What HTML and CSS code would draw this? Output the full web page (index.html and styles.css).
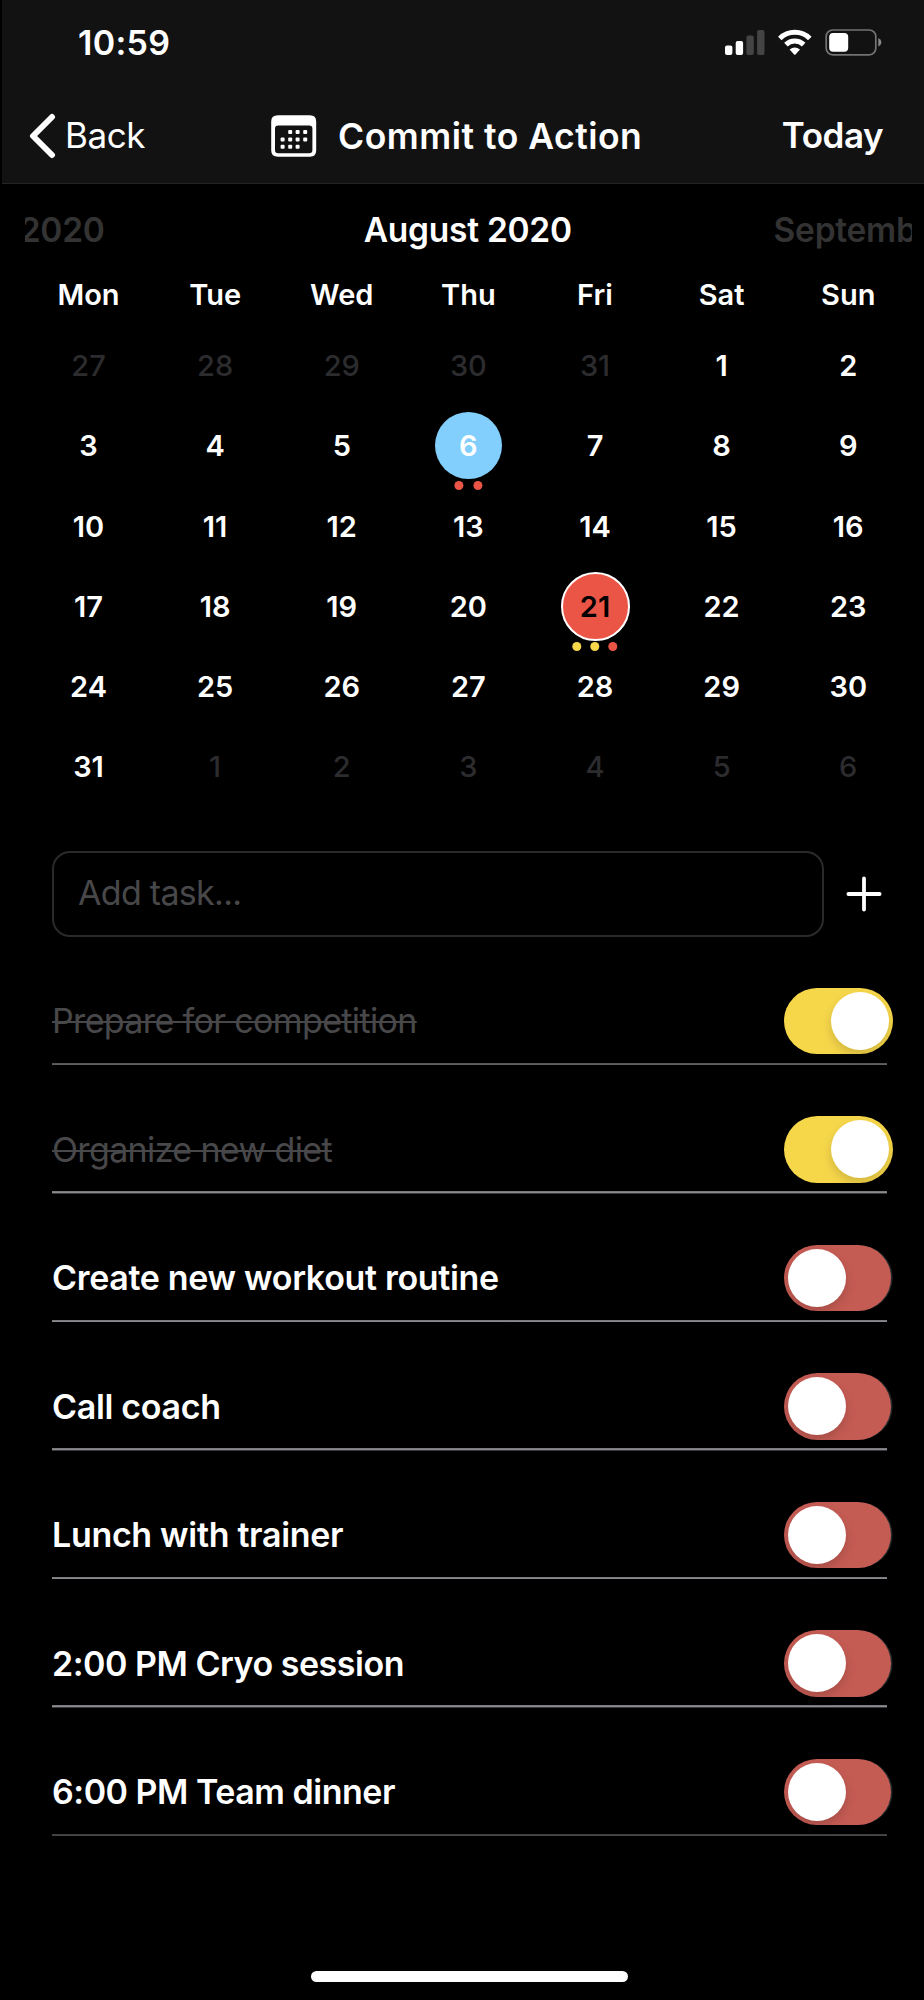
FILE: index.html
```
<!DOCTYPE html>
<html lang="en">
<head>
<meta charset="utf-8">
<title>Commit to Action</title>
<link rel="stylesheet" href="styles.css">
</head>
<body>
<div class="screen">
  <header class="header">
    <div class="status">
      <span class="clock">10:59</span>
      <svg class="status-icons" viewBox="0 0 158 28" width="158" height="28">
        <g fill="#fff">
          <rect x="0" y="16.5" width="7.4" height="9.5" rx="2"/>
          <rect x="10.7" y="12" width="7.4" height="14" rx="2"/>
          <g fill="#444"><rect x="21.4" y="6.5" width="7.4" height="19.5" rx="2"/>
          <rect x="32.1" y="1" width="7.4" height="25" rx="2"/></g>
        </g>
        <g fill="none" stroke="#fff" stroke-width="5">
          <path d="M54.8 9.4 A21.3 21.3 0 0 1 84.8 9.4"/>
          <path d="M60.9 15.6 A12.7 12.7 0 0 1 78.7 15.6"/>
        </g>
        <path d="M64.6 20.4 Q69.8 16.6 75 20.4 L70.5 25.5 Q69.8 26.1 69.1 25.5 Z" fill="#fff"/>
        <rect x="101.2" y="1" width="49.6" height="24.8" rx="6.5" fill="none" stroke="#737373" stroke-width="1.7"/>
        <rect x="104.2" y="4" width="19" height="18.8" rx="4" fill="#fff"/>
        <path d="M153.3 9 Q156.4 10.6 156.4 13.3 Q156.4 16 153.3 17.6 Z" fill="#8a8a8a"/>
      </svg>
    </div>
    <nav class="nav">
      <a class="back">
        <svg class="chevron" viewBox="0 0 27 46" width="27" height="46"><path d="M23 4 L4 23 L23 42" fill="none" stroke="#fff" stroke-width="6" stroke-linecap="round" stroke-linejoin="round"/></svg>
        <span>Back</span>
      </a>
      <div class="title">
        <svg viewBox="0 0 46 42" width="46" height="42">
          <path fill="#fff" fill-rule="evenodd" d="M7 .2 H39 Q45.2 .2 45.2 6.4 V35.6 Q45.2 41.8 39 41.8 H7 Q.2 41.8 .2 35.6 V6.4 Q.2 .2 7 .2 Z M7.2 10.5 Q4 10.5 4 13.7 V35 Q4 38.2 7.2 38.2 H38.2 Q41.4 38.2 41.4 35 V13.7 Q41.4 10.5 38.2 10.5 Z"/>
          <g fill="#fff">
            <rect x="17.2" y="15" width="4" height="4" rx="1"/><rect x="24.6" y="15" width="4" height="4" rx="1"/><rect x="32.2" y="15" width="4" height="4" rx="1"/>
            <rect x="9.6" y="22.4" width="4" height="4" rx="1"/><rect x="17.2" y="22.4" width="4" height="4" rx="1"/><rect x="24.6" y="22.4" width="4" height="4" rx="1"/><rect x="32.2" y="22.4" width="4" height="4" rx="1"/>
            <rect x="9.6" y="29.8" width="4" height="4" rx="1"/><rect x="17.2" y="29.8" width="4" height="4" rx="1"/><rect x="24.6" y="29.8" width="4" height="4" rx="1"/>
          </g>
        </svg>
        <h1>Commit to Action</h1>
      </div>
      <a class="today">Today</a>
    </nav>
  </header>

  <section class="calendar">
    <div class="months">
      <span class="month month-prev">2020</span>
      <span class="month month-current">August 2020</span>
      <span class="month month-next">Septemb</span>
    </div>
    <div class="week weekdays"><span>Mon</span><span>Tue</span><span>Wed</span><span>Thu</span><span>Fri</span><span>Sat</span><span>Sun</span></div>
    <div class="week"><span class="out">27</span><span class="out">28</span><span class="out">29</span><span class="out">30</span><span class="out">31</span><span>1</span><span>2</span></div>
    <div class="week"><span>3</span><span>4</span><span>5</span><span class="day-today">6<i class="dots"><i class="dot"></i><i class="dot"></i></i></span><span>7</span><span>8</span><span>9</span></div>
    <div class="week"><span>10</span><span>11</span><span>12</span><span>13</span><span>14</span><span>15</span><span>16</span></div>
    <div class="week"><span>17</span><span>18</span><span>19</span><span>20</span><span class="day-selected">21<i class="dots"><i class="dot dot-done"></i><i class="dot dot-done"></i><i class="dot"></i></i></span><span>22</span><span>23</span></div>
    <div class="week"><span>24</span><span>25</span><span>26</span><span>27</span><span>28</span><span>29</span><span>30</span></div>
    <div class="week"><span>31</span><span class="out">1</span><span class="out">2</span><span class="out">3</span><span class="out">4</span><span class="out">5</span><span class="out">6</span></div>
  </section>

  <div class="add">
    <div class="field">Add task...</div>
    <svg viewBox="0 0 36 36" width="36" height="36"><path d="M18 2.4 V33.6 M2.4 18 H33.6" stroke="#fff" stroke-width="3.8" stroke-linecap="round"/></svg>
  </div>

  <ul class="tasks">
    <li class="task done first"><span class="label">Prepare for competition</span><span class="toggle"></span></li>
    <li class="task done"><span class="label">Organize new diet</span><span class="toggle"></span></li>
    <li class="task"><span class="label">Create new workout routine</span><span class="toggle"></span></li>
    <li class="task"><span class="label">Call coach</span><span class="toggle"></span></li>
    <li class="task"><span class="label">Lunch with trainer</span><span class="toggle"></span></li>
    <li class="task timed"><span class="label">2:00 PM Cryo session</span><span class="toggle"></span></li>
    <li class="task timed last"><span class="label">6:00 PM Team dinner</span><span class="toggle"></span></li>
  </ul>
  <div class="home-indicator"></div>
</div>
</body>
</html>
```

FILE: styles.css
```
* { box-sizing: border-box; }

body {
  margin: 0;
  background: #000;
  color: #fff;
  font-family: Inter, "Liberation Sans", sans-serif;
}

.screen {
  display: flex;
  flex-direction: column;
  width: 924px;
  height: 2000px;
  overflow: hidden;
}

/* Header */
.header {
  height: 184px;
  margin-left: 2px;
  background: #121212;
  border-bottom: 1px solid #232323;
}

.status {
  display: flex;
  justify-content: space-between;
  align-items: center;
  height: 86px;
  padding: 0 41px 0 76px;
}

.clock {
  padding-bottom: 2px;
  font-size: 34px;
  font-weight: 600;
  letter-spacing: 0.3px;
}

.nav {
  display: flex;
  justify-content: space-between;
  align-items: center;
  height: 100px;
  padding: 0 41px 0 27px;
}

.back {
  display: flex;
  align-items: center;
  gap: 9px;
  width: 242px;
  font-size: 35px;
  letter-spacing: -0.4px;
}

.title {
  display: flex;
  align-items: center;
  gap: 21px;
  margin-right: auto;
}

h1 {
  margin: 0;
  font-size: 35.5px;
  font-weight: 600;
  letter-spacing: 0.5px;
}

.today {
  padding-bottom: 2px;
  font-size: 35px;
  font-weight: 600;
  letter-spacing: -0.5px;
}
.back span { padding-bottom: 2px; }

/* Calendar */
.calendar {
  width: 886.4px;
  margin-left: 25.2px;
  padding-top: 21px;
}

.months {
  display: flex;
  justify-content: space-between;
  height: 50px;
  overflow: hidden;
  line-height: 50px;
  font-size: 33.5px;
  font-weight: 600;
  letter-spacing: -0.25px;
  white-space: nowrap;
}

.month { flex: none; width: 210px; }
.month-prev {
  display: flex;
  justify-content: flex-end;
  width: 79.5px;
  color: #333;
}
.month-next { width: 138px; color: #333; }
.month-current { margin-left: 59px; }

.week {
  display: grid;
  grid-template-columns: repeat(7, 1fr);
  place-items: center;
  height: 80.3px;
  font-size: 29px;
  font-weight: 600;
}

.week > span {
  display: flex;
  align-items: center;
  justify-content: center;
  position: relative;
  height: 67px;
}

.weekdays { height: 70.3px; padding-top: 9.4px; }
.week.weekdays > span { height: auto; }

.out { color: #2c2c2e; font-weight: 500; }

.day-today,
.day-selected {
  width: 67px;
  border-radius: 50%;
}
.day-today { background: #82cffd; }
.week > .day-selected {
  width: 69px;
  height: 69px;
  background: #eb5545;
  border: 2px solid #fff;
  color: #000;
}

/* Task markers hang just below a day's circle */
.dots {
  position: absolute;
  left: 50%;
  bottom: -11.2px;
  display: flex;
  gap: 9.2px;
  transform: translateX(-50%);
}
.day-selected .dots { bottom: -12.2px; }

.dot {
  width: 9px;
  height: 9px;
  border-radius: 50%;
  background: #eb5545;
}
.dot-done { background: #f7d74a; }

/* New task */
.add {
  display: flex;
  align-items: center;
  gap: 22px;
  margin: 43.9px 0 0 52px;
}

.field {
  width: 772px;
  height: 86px;
  padding-left: 24px;
  border: 2px solid #2a2a2c;
  border-radius: 18px;
  color: #48484a;
  font-size: 34px;
  line-height: 80px;
  letter-spacing: -0.7px;
}

/* Task list */
.tasks {
  width: 834.5px;
  margin: 42.2px 0 0 52px;
  padding: 0;
  list-style: none;
}

.task {
  display: flex;
  align-items: flex-end;
  justify-content: space-between;
  height: 128.5px;
  padding-bottom: 11px;
  background: linear-gradient(#6c6c70, #929297 50%, #5c5c60) left bottom / 100% 2.6px no-repeat;
}
.task.first {
  height: 86px;
  background-image: linear-gradient(#505054, #6c6c70);
}
.task.last { background-image: linear-gradient(#3a3a3a, #484848, #303030); }

.label {
  font-size: 34px;
  font-weight: 600;
  line-height: 66px;
  letter-spacing: -0.32px;
}
.timed .label { letter-spacing: -0.48px; }
.done .label {
  color: #48484a;
  font-weight: 400;
  letter-spacing: -0.64px;
  text-decoration: line-through 2px;
}

.toggle {
  display: flex;
  width: 107px;
  height: 66.5px;
  margin-right: -4px;
  padding: 4px;
  border-radius: 34px;
  background: #c55c54;
  box-shadow: 2px 0 0 -0.5px #252a2c;
}
.toggle::before {
  content: "";
  width: 58px;
  height: 58px;
  border-radius: 50%;
  background: #fff;
  box-shadow: 0 5px 11px rgba(0, 0, 0, 0.16);
}
.done .toggle {
  justify-content: flex-end;
  width: 109px;
  margin-right: -6px;
  background: #f7d74a;
  box-shadow: none;
}

.home-indicator {
  width: 317px;
  height: 11px;
  margin: auto 0 18px 310.5px;
  border-radius: 6px;
  background: #fff;
}
```
